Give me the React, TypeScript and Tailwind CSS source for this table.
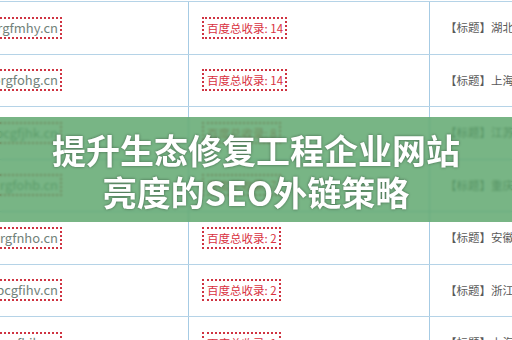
const rows = [
  { domain: "www.abcorgfmhy.cn", count: 14, title: "湖北省生态修复工程" },
  { domain: "www.abcorgfohg.cn", count: 14, title: "上海生态修复工程" },
  { domain: "www.xyabcgfjhk.cn", count: 8, title: "江苏生态修复工程" },
  { domain: "www.abcorgfohb.cn", count: 7, title: "重庆生态修复工程" },
  { domain: "www.abcorgfnho.cn", count: 2, title: "安徽生态修复工程" },
  { domain: "www.xyabcgfihv.cn", count: 2, title: "浙江生态修复工程" },
  { domain: "www.abcorgfhjk.cn", count: 1, title: "上海生态修复工程" },
];

function Row({ domain, count, title }: { domain: string; count: number; title: string }) {
  return (
    <div className="grid grid-cols-[189px_241px_1fr] h-[52.5px] border-b border-[#b5d3e7]">
      <div className="flex items-center justify-end pr-[126px] border-r border-[#a6cbe4] overflow-hidden">
        <span className="shrink-0 whitespace-nowrap h-[22px] pl-[3px] pr-[2px] border-2 border-dotted border-[#cf3442] text-[13px] leading-[18px] text-[#72827a]">
          {domain}
        </span>
      </div>
      <div className="flex items-center pl-[13px] border-r border-[#a6cbe4]">
        <span className="whitespace-nowrap h-[22px] pl-[3px] pr-[2px] border-2 border-dotted border-[#cf3442] text-[11.5px] leading-[18px] text-[#d9323f]">
          百度总收录: {count}
        </span>
      </div>
      <div className="flex items-center pl-[15px] overflow-hidden whitespace-nowrap text-[11.5px] text-[#595959]">
        【标题】{title}
      </div>
    </div>
  );
}

export default function App() {
  return (
    <div className="relative w-[512px] h-[340px] overflow-hidden bg-white font-['Noto_Sans_CJK_SC','Noto_Sans',sans-serif]">
      <div className="pt-[1px]">
        <div className="border-t border-[#b5d3e7]">
          {rows.map((r) => (
            <Row key={r.domain} {...r} />
          ))}
        </div>
      </div>

      {/* title band */}
      <div className="absolute left-0 right-0 top-[117px] h-[105px] bg-[#56a266]/80 backdrop-blur-[1px] flex flex-col items-center justify-center pt-[3px]">
        <p className="text-white font-bold text-[34px] leading-[42px] [text-shadow:0_0_3px_rgba(0,0,0,0.45)]">
          提升生态修复工程企业网站
        </p>
        <p className="text-white font-bold text-[34px] leading-[42px] [text-shadow:0_0_3px_rgba(0,0,0,0.45)]">
          亮度的SEO外链策略
        </p>
      </div>
    </div>
  );
}
